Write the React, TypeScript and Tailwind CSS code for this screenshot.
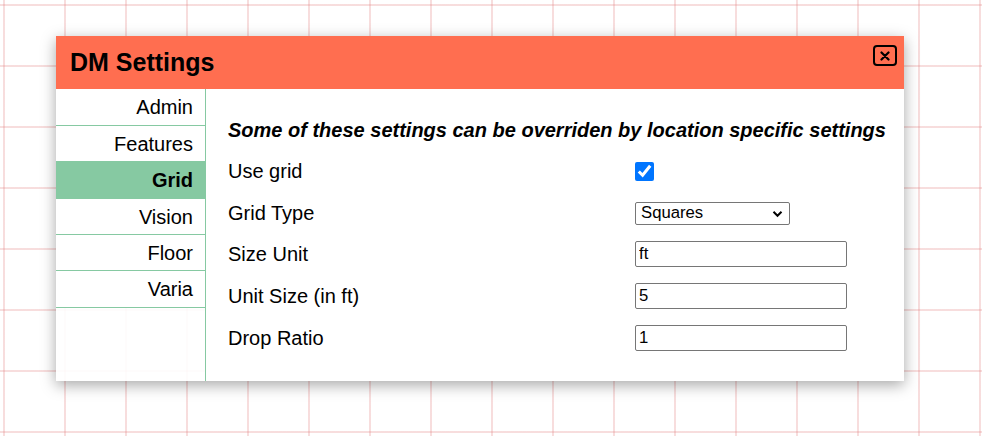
import React, { useState } from 'react';

const tabs = [
  { name: 'Admin', h: 'h-[37px]' },
  { name: 'Features', h: 'h-[36px]' },
  { name: 'Grid', h: 'h-[37px]' },
  { name: 'Vision', h: 'h-[36px]' },
  { name: 'Floor', h: 'h-[36px]' },
  { name: 'Varia', h: 'h-[37px]' },
];

export default function App() {
  const [active, setActive] = useState('Grid');
  const [useGrid, setUseGrid] = useState(true);

  return (
    <div className="w-[982px] h-[436px] overflow-hidden bg-white bg-[linear-gradient(to_right,rgba(225,120,120,0.25)_2px,transparent_2px),linear-gradient(to_bottom,rgba(225,120,120,0.25)_2px,transparent_2px)] bg-[size:61px_61px] bg-[position:3px_4px] pt-[36px] pl-[56px] font-['Liberation_Sans',Arial,sans-serif] text-black">
      <div className="w-[848px] h-[345px] flex flex-col shadow-[0_4px_14px_rgba(0,0,0,0.35)]">
        {/* header */}
        <div className="h-[53px] bg-[#ff6e50] flex items-start justify-between pl-[14px] pr-[7px]">
          <h1 className="text-[25px] font-bold leading-none mt-[14px]">DM Settings</h1>
          <button className="mt-[9px] w-[24px] h-[21px] border-2 border-black rounded-[4px] flex items-center justify-center">
            <svg width="10" height="10" viewBox="0 0 10 10">
              <path d="M1.5 1.5 L8.5 8.5 M8.5 1.5 L1.5 8.5" stroke="black" strokeWidth="2.2" strokeLinecap="round" />
            </svg>
          </button>
        </div>

        <div className="flex flex-1 min-h-0">
          {/* sidebar */}
          <div className="w-[150px] flex flex-col border-r border-[#86c9a2]">
            {tabs.map((t) => (
              <div
                key={t.name}
                onClick={() => setActive(t.name)}
                className={`${t.h} flex items-center justify-end pr-[12px] text-[20px] border-b border-[#86c9a2] cursor-pointer ${
                  active === t.name ? 'bg-[#86c9a2] font-bold' : 'bg-white'
                }`}
              >
                {t.name}
              </div>
            ))}
            <div className="flex-1 bg-white/90" />
          </div>

          {/* content */}
          <div className="flex-1 bg-white pl-[22px] pr-[18px] pt-[20px] text-[20px]">
            <div className="h-[41px] flex items-center font-bold italic whitespace-nowrap">
              Some of these settings can be overriden by location specific settings
            </div>
            <div className="grid grid-cols-[407px_1fr]">
              <div className="h-[42px] flex items-center">Use grid</div>
              <div className="h-[42px] flex items-center">
                <input
                  type="checkbox"
                  checked={useGrid}
                  onChange={() => setUseGrid(!useGrid)}
                  className="w-[19px] h-[19px] m-0 accent-[#0075ff]"
                />
              </div>

              <div className="h-[42px] flex items-center">Grid Type</div>
              <div className="h-[42px] flex items-center">
                <div className="relative w-[155px] h-[23px]">
                  <select className="block appearance-none w-full h-full border border-[#767676] rounded-[2px] bg-white pl-[5px] text-[16.7px] leading-none outline-none">
                    <option>Squares</option>
                    <option>Hexes</option>
                  </select>
                  <svg className="absolute right-[7px] top-[8px] pointer-events-none" width="11" height="8" viewBox="0 0 11 8">
                    <path d="M1.5 1.8 L5.5 5.8 L9.5 1.8" fill="none" stroke="black" strokeWidth="2" />
                  </svg>
                </div>
              </div>

              <div className="h-[40px] flex items-center">Size Unit</div>
              <div className="h-[40px] flex items-center">
                <input defaultValue="ft" className="w-[212px] h-[26px] border border-[#767676] rounded-[2px] px-[3px] text-[16.7px] outline-none" />
              </div>

              <div className="h-[43px] flex items-center">Unit Size (in ft)</div>
              <div className="h-[43px] flex items-center">
                <input defaultValue="5" className="w-[212px] h-[26px] border border-[#767676] rounded-[2px] px-[3px] text-[16.7px] outline-none" />
              </div>

              <div className="h-[42px] flex items-center">Drop Ratio</div>
              <div className="h-[42px] flex items-center">
                <input defaultValue="1" className="w-[212px] h-[26px] border border-[#767676] rounded-[2px] px-[3px] text-[16.7px] outline-none" />
              </div>
            </div>
          </div>
        </div>
      </div>
    </div>
  );
}
